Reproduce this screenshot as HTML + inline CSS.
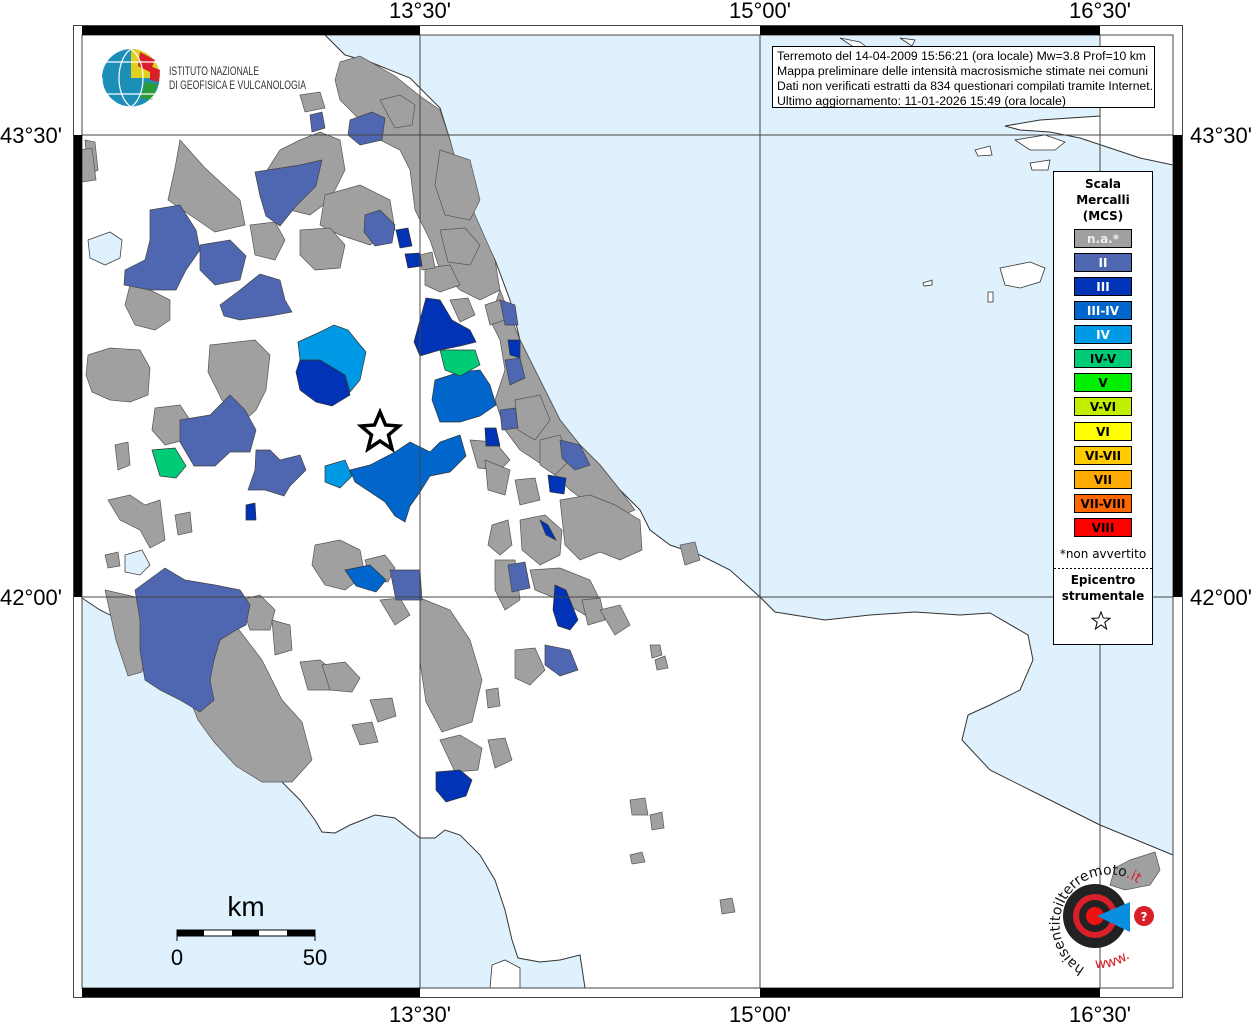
<!DOCTYPE html>
<html><head><meta charset="utf-8"><style>
html,body{margin:0;padding:0;background:#fff;width:1255px;height:1024px;overflow:hidden}
svg{display:block}
.lab{font-family:"Liberation Sans",sans-serif;font-size:22px;fill:#000}
.g{fill:#a0a0a0;stroke:#555;stroke-width:.7}
.b2{fill:#4f66b0;stroke:#444;stroke-width:.7}
.b3{fill:#0033b5;stroke:#333;stroke-width:.7}
.b34{fill:#0066cc;stroke:#333;stroke-width:.7}
.b4{fill:#0099e6;stroke:#333;stroke-width:.7}
.gr{fill:#00cc77;stroke:#333;stroke-width:.7}
.lk{fill:#dff1fd;stroke:#444;stroke-width:.8}
.lg{font-family:"DejaVu Sans",sans-serif;font-weight:bold;font-size:12px;text-anchor:middle}
</style></head><body>
<svg width="1255" height="1024" viewBox="0 0 1255 1024" xmlns="http://www.w3.org/2000/svg">
<rect x="82" y="35" width="1091" height="953" fill="#fff"/>
<!-- Adriatic sea -->
<path d="M325,35 L345,55 370,62 410,78 440,108 450,140 460,180 475,220 495,260 510,300 520,340 540,380 560,420 580,445 600,465 620,490 640,510 650,530 670,545 700,555 730,570 760,597 775,612 825,620 870,615 915,612 960,615 990,613 1028,635 1033,660 1020,690 990,705 968,715 962,740 990,770 1040,795 1100,825 1173,855 L1173,165 1140,158 1110,148 1080,138 1050,132 1020,130 1005,126 1040,120 1100,116 1100,35 Z" fill="#dff1fd" stroke="#333" stroke-width="1"/>
<path d="M1000,268 L1030,262 1045,268 1040,282 1020,288 1005,285Z" fill="#fff" stroke="#333" stroke-width=".8"/>
<path d="M923,283 L932,280 932,285 924,286Z M988,292 L993,292 993,302 988,302Z" fill="#fff" stroke="#333" stroke-width=".8"/>
<path d="M1015,140 L1045,135 1065,142 1055,150 1030,150Z M1030,163 L1050,160 1048,170 1032,170Z M975,150 L990,146 992,155 978,156Z" fill="#fff" stroke="#333" stroke-width=".8"/>
<path d="M840,38 L860,42 870,50 855,48Z M900,38 L915,40 912,46Z" fill="#fff" stroke="#333" stroke-width=".8"/>
<!-- Tyrrhenian sea -->
<path d="M82,598 L100,610 130,625 145,650 170,680 190,700 215,725 245,755 260,770 280,780 300,800 315,820 322,832 335,833 350,825 375,815 395,818 410,830 420,838 435,838 445,830 460,835 480,855 495,880 505,910 512,940 518,958 540,962 560,960 580,955 585,988 82,988Z" fill="#dff1fd" stroke="#333" stroke-width="1"/>
<path d="M490,988 L492,965 505,960 520,968 520,988Z" fill="#fff" stroke="#333" stroke-width=".8"/>
<!-- Calabria gray -->
<path d="M1130,860 L1155,852 1160,870 1150,885 1125,890 1110,885 1115,868Z" class="g"/>
<!-- lakes -->
<path d="M88,240 L110,232 122,240 120,258 105,265 90,258Z" class="lk"/>
<path d="M125,555 L142,550 150,565 140,575 125,572Z" class="lk"/>
<!-- gray municipalities -->
<g class="g">
<path d="M340,62 L360,56 395,76 420,96 440,110 450,140 460,175 475,215 495,260 500,290 480,300 460,290 440,270 430,240 415,210 410,170 400,150 380,140 360,120 340,100 335,80Z"/>
<path d="M500,290 L520,340 540,380 560,420 580,445 600,465 620,490 635,510 610,520 590,505 570,490 550,470 520,450 505,430 495,400 505,370 500,340 490,320Z"/>
<path d="M180,140 L205,168 240,200 245,225 215,232 190,215 168,200 175,168Z"/>
<path d="M280,150 L300,140 320,132 340,140 345,170 330,200 310,215 290,210 272,200 266,172Z"/>
<path d="M325,195 L360,185 390,200 395,230 370,245 340,235 320,225Z"/>
<path d="M300,230 L330,228 345,245 340,268 315,270 300,255Z"/>
<path d="M250,225 L275,222 285,240 275,260 255,255Z"/>
<path d="M85,140 L95,142 98,170 88,175Z"/>
<path d="M130,285 L150,290 170,300 170,320 155,330 135,325 125,305Z"/>
<path d="M88,355 L110,348 140,350 150,368 148,395 130,402 110,400 92,392 86,375Z"/>
<path d="M210,345 L255,340 270,355 266,390 256,410 245,420 222,400 208,372Z"/>
<path d="M155,408 L180,405 190,420 185,440 165,445 152,430Z"/>
<path d="M115,445 L128,442 130,465 118,470Z"/>
<path d="M108,500 L130,495 145,505 160,500 165,540 150,548 140,530 120,520Z"/>
<path d="M175,515 L190,512 192,532 178,535Z"/>
<path d="M105,555 L118,552 120,566 108,568Z"/>
<path d="M105,590 L140,598 148,640 142,672 128,676 116,640Z"/>
<path d="M230,618 L262,660 282,700 302,722 312,760 292,782 262,782 236,766 214,742 198,720 190,700 200,672 215,652Z"/>
<path d="M240,600 L260,595 275,610 270,630 250,630Z"/>
<path d="M272,620 L290,625 292,650 275,655Z"/>
<path d="M315,545 L340,540 360,550 365,575 345,590 325,585 312,565Z"/>
<path d="M365,560 L385,555 395,568 388,582 370,580Z"/>
<path d="M380,600 L400,598 410,615 395,625Z"/>
<path d="M420,598 L450,610 470,640 482,680 472,722 442,732 426,702 420,662Z"/>
<path d="M300,662 L320,660 335,672 330,690 308,690Z"/>
<path d="M322,665 L345,662 360,678 352,692 330,690Z"/>
<path d="M370,700 L392,698 396,716 378,722Z"/>
<path d="M352,725 L372,722 378,742 360,745Z"/>
<path d="M440,740 L460,735 482,748 478,770 455,772Z"/>
<path d="M486,690 L498,688 500,706 488,708Z"/>
<path d="M488,740 L505,738 512,760 495,768Z"/>
<path d="M492,525 L508,520 512,545 500,555 488,545Z"/>
<path d="M495,560 L515,560 520,600 505,610 495,590Z"/>
<path d="M520,520 L545,515 562,530 560,555 540,565 522,550Z"/>
<path d="M560,500 L590,495 615,505 640,520 642,550 620,560 600,552 580,560 565,545Z"/>
<path d="M530,570 L560,568 590,580 600,600 585,615 560,600 535,590Z"/>
<path d="M582,600 L600,598 605,620 588,625Z"/>
<path d="M515,650 L535,648 545,670 530,685 515,678Z"/>
<path d="M600,610 L620,605 630,625 615,635Z"/>
<path d="M650,645 L660,645 662,655 652,658Z"/>
<path d="M680,545 L695,542 700,560 685,565Z"/>
<path d="M470,440 L495,442 510,460 500,470 478,468Z"/>
<path d="M485,460 L510,470 505,495 488,490Z"/>
<path d="M515,400 L540,395 550,420 535,440 518,430Z"/>
<path d="M540,440 L560,435 570,460 555,475 540,465Z"/>
<path d="M515,480 L535,478 540,500 520,505Z"/>
<path d="M380,100 L400,95 415,105 412,125 395,128Z"/>
<path d="M300,95 L320,92 325,108 305,112Z"/>
<path d="M440,150 L470,160 480,200 470,220 445,215 435,185Z"/>
<path d="M440,230 L465,228 480,245 470,265 448,262Z"/>
<path d="M425,268 L450,265 460,285 440,292 425,285Z"/>
<path d="M420,255 L432,252 435,268 422,270Z"/>
<path d="M450,300 L468,298 475,315 460,322Z"/>
<path d="M485,305 L500,300 505,320 490,325Z"/>
<path d="M630,800 L645,798 648,815 632,815Z"/>
<path d="M650,815 L662,812 664,828 652,830Z"/>
<path d="M630,855 L642,852 645,862 632,864Z"/>
<path d="M720,900 L732,898 735,912 722,914Z"/>
<path d="M655,660 L665,656 668,668 657,670Z"/>
<path d="M80,150 L92,148 96,180 82,182Z"/>
</g>
<!-- blue II -->
<g class="b2">
<path d="M255,172 L300,165 322,160 316,186 296,206 280,226 266,216 260,196Z"/>
<path d="M150,210 L180,205 196,230 200,250 186,270 176,290 150,290 124,285 125,270 145,260 150,240Z"/>
<path d="M200,245 L230,240 246,256 240,280 215,285 200,270Z"/>
<path d="M220,305 L240,290 260,274 280,280 285,300 292,312 270,316 240,320 224,316Z"/>
<path d="M180,420 L210,415 230,395 245,410 256,430 250,452 230,452 215,466 194,466 180,442Z"/>
<path d="M256,450 L270,450 280,460 300,455 306,470 290,486 284,496 265,490 248,490 255,470Z"/>
<path d="M135,590 L165,568 185,580 215,585 240,590 250,605 246,625 236,630 220,640 214,660 210,680 214,700 200,712 180,700 160,690 145,680 140,650 140,620Z"/>
<path d="M365,215 L380,210 395,225 392,243 375,246 364,232Z"/>
<path d="M350,120 L372,112 385,118 382,140 360,145 348,135Z"/>
<path d="M310,115 L322,112 325,128 312,132Z"/>
<path d="M545,645 L570,650 578,670 560,676 545,665Z"/>
<path d="M508,565 L525,562 530,588 512,592Z"/>
<path d="M390,570 L420,570 422,600 396,600Z"/>
<path d="M500,410 L515,408 518,428 502,430Z"/>
<path d="M560,440 L580,445 590,465 575,470 562,458Z"/>
<path d="M500,300 L515,305 518,325 505,325Z"/>
<path d="M505,360 L520,358 525,378 510,385Z"/>
</g>
<!-- III -->
<g class="b3">
<path d="M300,360 L320,360 345,375 350,395 332,406 316,402 300,390 296,372Z"/>
<path d="M396,230 L408,228 412,246 400,248Z"/>
<path d="M405,254 L420,253 422,266 408,268Z"/>
<path d="M426,298 L440,300 452,320 470,330 476,342 460,346 440,350 420,356 414,342 420,320Z"/>
<path d="M555,585 L566,590 578,620 570,630 558,626 553,610Z"/>
<path d="M436,772 L460,770 472,780 466,796 446,802 436,790Z"/>
<path d="M485,428 L496,428 500,446 486,446Z"/>
<path d="M548,475 L566,478 564,494 550,492Z"/>
<path d="M540,520 L548,525 556,540 546,535Z"/>
<path d="M246,505 L255,503 256,520 246,520Z"/>
<path d="M508,340 L520,340 520,358 510,355Z"/>
</g>
<g class="b4">
<path d="M298,342 L320,332 334,325 348,330 356,340 366,352 360,380 350,392 345,375 320,360 300,360Z"/>
<path d="M325,466 L345,460 352,476 340,488 325,482Z"/>
</g>
<g class="b34">
<path d="M350,470 L370,465 395,452 410,442 430,452 440,442 460,435 466,456 450,472 430,476 420,492 410,506 405,522 395,516 385,502 370,492 355,482Z"/>
<path d="M435,380 L460,372 480,370 490,385 496,405 480,416 460,422 440,422 432,400Z"/>
<path d="M345,570 L370,565 386,580 376,592 356,586Z"/>
</g>
<g class="gr">
<path d="M440,350 L475,350 480,365 460,376 445,370Z"/>
<path d="M152,450 L175,448 186,466 176,478 160,476Z"/>
</g>
<!-- grid -->
<g stroke="#444" stroke-width="1" fill="none">
<line x1="420" y1="35" x2="420" y2="988"/>
<line x1="760" y1="35" x2="760" y2="988"/>
<line x1="1100" y1="35" x2="1100" y2="988"/>
<line x1="82" y1="135" x2="1173" y2="135"/>
<line x1="82" y1="597" x2="1173" y2="597"/>
</g>
<!-- frame -->
<rect x="73.5" y="25.5" width="1109" height="972" fill="none" stroke="#444" stroke-width="1"/>
<rect x="82" y="35" width="1091" height="953" fill="none" stroke="#444" stroke-width="1"/>
<g fill="#000">
<rect x="82" y="26" width="338" height="9"/><rect x="760" y="26" width="340" height="9"/>
<rect x="82" y="988" width="338" height="9"/><rect x="760" y="988" width="340" height="9"/>
<rect x="74" y="135" width="8" height="462"/><rect x="1173" y="135" width="9" height="462"/>
</g>
<!-- labels -->
<g class="lab">
<text x="420" y="18" text-anchor="middle">13°30'</text>
<text x="760" y="18" text-anchor="middle">15°00'</text>
<text x="1100" y="18" text-anchor="middle">16°30'</text>
<text x="420" y="1022" text-anchor="middle">13°30'</text>
<text x="760" y="1022" text-anchor="middle">15°00'</text>
<text x="1100" y="1022" text-anchor="middle">16°30'</text>
<text x="0" y="143">43°30'</text>
<text x="0" y="605">42°00'</text>
<text x="1190" y="143">43°30'</text>
<text x="1190" y="605">42°00'</text>
</g>
<!-- epicentre star -->
<path d="M380,412 L385.5,425 399,426 388.5,435 392,449 380,441 368,449 371.5,435 361,426 374.5,425Z" fill="#fff" stroke="#000" stroke-width="3.5"/>
<!-- INGV logo -->
<g>
<circle cx="131" cy="78" r="29" fill="#1b8fb8"/>
<path d="M131,49 A29,29 0 0 1 160,78 L131,78Z" fill="#e0d020"/>
<path d="M140,52 L155,60 150,72 138,66Z" fill="#d81f2a"/>
<path d="M145,82 L158,84 152,100 140,98Z" fill="#2a9a3a"/>
<path d="M150,66 L160,70 159,82 150,80Z" fill="#d81f2a"/>
<path d="M102,78 A29,29 0 0 0 160,78 M131,49 C115,60 115,96 131,107 M131,49 C147,60 147,96 131,107 M106,62 L156,62 M106,94 L156,94" fill="none" stroke="#fff" stroke-width="1.2"/>
<text x="169" y="75" font-family="Liberation Sans,sans-serif" font-size="12" fill="#333" textLength="90" lengthAdjust="spacingAndGlyphs">ISTITUTO NAZIONALE</text>
<text x="169" y="89" font-family="Liberation Sans,sans-serif" font-size="12" fill="#333" textLength="137" lengthAdjust="spacingAndGlyphs">DI GEOFISICA E VULCANOLOGIA</text>
</g>
<!-- info box -->
<rect x="772.5" y="46.5" width="382" height="61" fill="#fff" stroke="#000"/>
<g font-family="Liberation Sans,sans-serif" font-size="11.5" fill="#000">
<text x="777" y="60" textLength="369" lengthAdjust="spacingAndGlyphs">Terremoto del 14-04-2009 15:56:21 (ora locale) Mw=3.8 Prof=10 km</text>
<text x="777" y="75" textLength="371" lengthAdjust="spacingAndGlyphs">Mappa preliminare delle intensità macrosismiche stimate nei comuni</text>
<text x="777" y="90" textLength="376" lengthAdjust="spacingAndGlyphs">Dati non verificati estratti da 834 questionari compilati tramite Internet.</text>
<text x="777" y="105" textLength="289" lengthAdjust="spacingAndGlyphs">Ultimo aggiornamento: 11-01-2026 15:49 (ora locale)</text>
</g>
<!-- legend -->
<rect x="1053.5" y="171.5" width="99" height="473" fill="#fff" stroke="#000"/>
<g class="lg" fill="#000" font-size="12.5">
<text x="1103" y="188">Scala</text><text x="1103" y="204">Mercalli</text><text x="1103" y="220">(MCS)</text>
</g>
<g stroke="#000" stroke-width="1">
<rect x="1074.5" y="229.5" width="57" height="18" fill="#a0a0a0"/>
<rect x="1074.5" y="253.5" width="57" height="18" fill="#4f66b0"/>
<rect x="1074.5" y="277.5" width="57" height="18" fill="#0033b5"/>
<rect x="1074.5" y="301.5" width="57" height="18" fill="#0066cc"/>
<rect x="1074.5" y="325.5" width="57" height="18" fill="#0099e6"/>
<rect x="1074.5" y="349.5" width="57" height="18" fill="#00cc77"/>
<rect x="1074.5" y="373.5" width="57" height="18" fill="#00ee00"/>
<rect x="1074.5" y="397.5" width="57" height="18" fill="#c0f000"/>
<rect x="1074.5" y="422.5" width="57" height="18" fill="#ffff00"/>
<rect x="1074.5" y="446.5" width="57" height="18" fill="#ffcc00"/>
<rect x="1074.5" y="470.5" width="57" height="18" fill="#ffaa00"/>
<rect x="1074.5" y="494.5" width="57" height="18" fill="#ff6600"/>
<rect x="1074.5" y="518.5" width="57" height="18" fill="#ff0000"/>
</g>
<g class="lg">
<text x="1103" y="243" fill="#eee">n.a.*</text>
<text x="1103" y="267" fill="#fff">II</text>
<text x="1103" y="291" fill="#fff">III</text>
<text x="1103" y="315" fill="#fff">III-IV</text>
<text x="1103" y="339" fill="#fff">IV</text>
<text x="1103" y="363" fill="#000">IV-V</text>
<text x="1103" y="387" fill="#000">V</text>
<text x="1103" y="411" fill="#000">V-VI</text>
<text x="1103" y="436" fill="#000">VI</text>
<text x="1103" y="460" fill="#000">VI-VII</text>
<text x="1103" y="484" fill="#000">VII</text>
<text x="1103" y="508" fill="#000">VII-VIII</text>
<text x="1103" y="532" fill="#000">VIII</text>
</g>
<text x="1103" y="558" font-family="DejaVu Sans,sans-serif" font-size="12" text-anchor="middle">*non avvertito</text>
<line x1="1054" y1="568.5" x2="1152" y2="568.5" stroke="#000" stroke-dasharray="2,2"/>
<g class="lg" fill="#000"><text x="1103" y="584">Epicentro</text><text x="1103" y="600">strumentale</text></g>
<path d="M1101,612 L1103.3,618 1110,618.3 1104.8,622.3 1106.6,629 1101,625 1095.4,629 1097.2,622.3 1092,618.3 1098.7,618Z" fill="#fff" stroke="#000" stroke-width="1"/>
<!-- scale bar -->
<text x="246" y="916" font-family="Liberation Sans,sans-serif" font-size="28" text-anchor="middle">km</text>
<rect x="177" y="930" width="138" height="6" fill="#fff" stroke="#000"/>
<g fill="#000"><rect x="177" y="930" width="27" height="6"/><rect x="232" y="930" width="27" height="6"/><rect x="287" y="930" width="28" height="6"/></g>
<line x1="177" y1="930" x2="177" y2="941" stroke="#000"/><line x1="315" y1="930" x2="315" y2="941" stroke="#000"/>
<text x="177" y="965" font-family="Liberation Sans,sans-serif" font-size="22" text-anchor="middle">0</text>
<text x="315" y="965" font-family="Liberation Sans,sans-serif" font-size="22" text-anchor="middle">50</text>
<!-- haisentito logo -->
<g>
<circle cx="1095" cy="916" r="32" fill="#222"/>
<circle cx="1095" cy="916" r="22" fill="#d81f2a"/>
<circle cx="1095" cy="916" r="16" fill="#222"/>
<circle cx="1095" cy="916" r="9" fill="#e11"/>
<path d="M1097,916 L1130,902 1130,932Z" fill="#0a8ee0"/>
<circle cx="1144" cy="916" r="10" fill="#d81f2a"/>
<text x="1144" y="921" font-family="DejaVu Sans,sans-serif" font-size="12" font-weight="bold" fill="#fff" text-anchor="middle">?</text>
<path id="arc" d="M1085,968 A50,50 0 1 1 1150,895" fill="none"/>
<text font-family="DejaVu Sans,sans-serif" font-size="14" fill="#111"><textPath href="#arc">haisentitoilterremoto<tspan fill="#d81f2a">.it</tspan></textPath></text>
<path id="arc2" d="M1095,968 A52,52 0 0 0 1145,940" fill="none"/>
<text font-family="DejaVu Sans,sans-serif" font-size="14" fill="#d81f2a"><textPath href="#arc2">www.</textPath></text>
</g>
</svg>
</body></html>
